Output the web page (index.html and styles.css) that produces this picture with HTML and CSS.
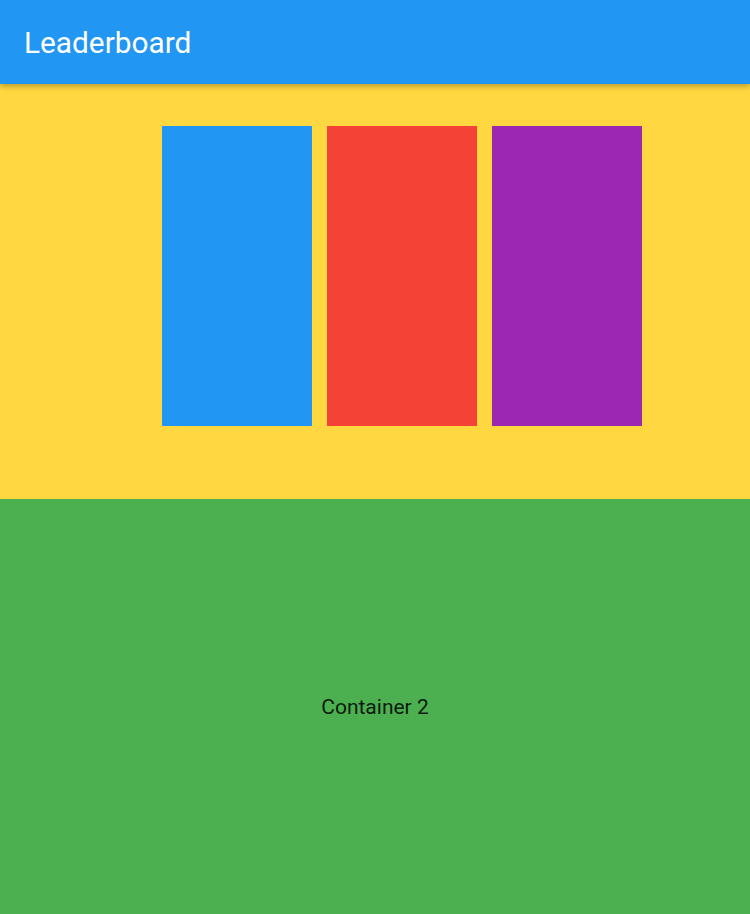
FILE: index.html
```
<!DOCTYPE html>
<html>
<head>
<meta charset="utf-8">
<link rel="stylesheet" href="styles.css">
</head>
<body>
<div class="app">
  <header class="appbar"><h1 class="title">Leaderboard</h1></header>
  <section class="top">
    <div class="bars">
      <div class="bar bar-blue"></div>
      <div class="bar bar-red"></div>
      <div class="bar bar-purple"></div>
    </div>
  </section>
  <section class="bottom"><span class="label">Container 2</span></section>
</div>
</body>
</html>
```
FILE: styles.css
```
html, body { margin: 0; padding: 0; }
body { font-family: Roboto, "Noto Sans", sans-serif; }
.app { width: 750px; height: 914px; display: flex; flex-direction: column; overflow: hidden; }
.appbar {
  height: 84px; flex: none; background: #2196F3; display: flex; align-items: center;
  padding-left: 24px; box-shadow: 0 2px 6px rgba(0,0,0,0.3); position: relative; z-index: 1;
}
.title { margin: 0; color: #fff; font-size: 29.8px; font-weight: 400; }
.top { height: 415px; flex: none; background: #FFD740; }
.bars { display: flex; gap: 15px; padding: 42px 0 0 162px; }
.bar { width: 150px; height: 300px; }
.bar-blue { background: #2196F3; }
.bar-red { background: #F44336; }
.bar-purple { background: #9C27B0; }
.bottom { flex: 1; background: #4CAF50; display: flex; align-items: center; justify-content: center; }
.label { font-size: 21px; color: rgba(0,0,0,0.87); }
```
